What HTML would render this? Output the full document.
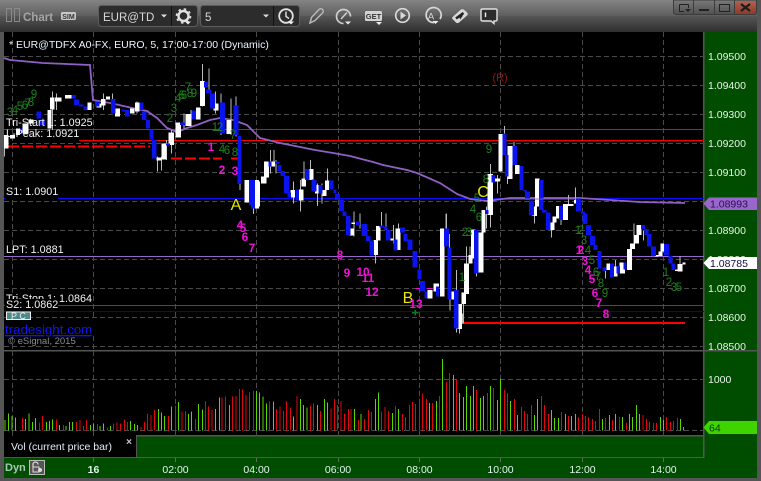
<!DOCTYPE html>
<html><head><meta charset="utf-8"><title>Chart</title>
<style>
html,body{margin:0;padding:0;background:#555;width:761px;height:481px;overflow:hidden}
svg{position:absolute;left:0;top:0;display:block}
text{font-family:"Liberation Sans",sans-serif}
.p{font-size:10.5px;fill:#e8f4e8}
.l{font-size:10.8px;fill:#f2f2f2}
.m{font-size:12px;font-weight:bold;fill:#f010d8;text-anchor:middle}
.g{font-size:11.5px;fill:#1a821a;text-anchor:middle}
.t{font-size:10.5px;fill:#e4f2f2;text-anchor:middle}
.y{font-size:16px;fill:#e8e800;text-anchor:middle}
</style></head><body>
<svg width="761" height="481" viewBox="0 0 761 481" xmlns="http://www.w3.org/2000/svg">
<defs>
<linearGradient id="tb" x1="0" y1="0" x2="0" y2="1"><stop offset="0" stop-color="#848484"/><stop offset=".5" stop-color="#5e5e5e"/><stop offset=".5" stop-color="#565656"/><stop offset="1" stop-color="#2e2e2e"/></linearGradient>
<linearGradient id="wb" x1="0" y1="0" x2="0" y2="1"><stop offset="0" stop-color="#7a7a7a"/><stop offset="1" stop-color="#505050"/></linearGradient>
<linearGradient id="xb" x1="0" y1="0" x2="0" y2="1"><stop offset="0" stop-color="#b5604e"/><stop offset="1" stop-color="#8c3a2c"/></linearGradient>
</defs>
<rect width="761" height="481" fill="#555"/>
<rect width="761" height="32" fill="url(#tb)"/>
<!-- chart and panels -->
<rect x="4" y="32" width="699" height="404" fill="#000"/>
<rect x="704" y="32" width="53" height="446" fill="#004d00"/>
<rect x="4" y="436" width="700" height="42" fill="#004d00"/>
<rect x="4" y="436" width="132" height="21" fill="#000"/>
<g fill="#555"><rect x="703" y="32" width="1.5" height="426"/><rect x="4" y="350" width="757" height="1.5"/><rect x="136" y="435" width="568" height="1.5"/><rect x="136" y="436" width="1" height="21"/><rect x="4" y="457" width="700" height="1"/><rect x="0" y="478" width="761" height="3"/><rect x="757" y="0" width="4" height="481"/><rect x="0" y="32" width="4" height="449"/></g>
<!-- grid -->
<g stroke="#4a4a4a" stroke-width="1" stroke-dasharray="5 3" shape-rendering="crispEdges" fill="none">
<path d="M4 56.5H708M4 85.5H708M4 114.5H708M4 143.5H708M4 172.5H708M4 201.5H708M4 230.5H708M4 259.5H708M4 288.5H708M4 317.5H708M4 346.5H708M4 379.5H708M4 430.5H708"/>
<path d="M12.5 32V350M93.5 32V350M175.5 32V350M256.5 32V350M338.5 32V350M419.5 32V350M500.5 32V350M582.5 32V350M663.5 32V350M12.5 351V436M93.5 351V436M175.5 351V436M256.5 351V436M338.5 351V436M419.5 351V436M500.5 351V436M582.5 351V436M663.5 351V436"/>
</g>
<!-- horizontal levels -->
<g shape-rendering="crispEdges" fill="none">
<path d="M4 129.5H704" stroke="#1c6e1c"/>
<path d="M79 140.5H704" stroke="#f00" stroke-width="1"/>
<path d="M8 146.5H150" stroke="#f00" stroke-width="2" stroke-dasharray="11 3"/>
<path d="M171 158.5H222M231 158.5H238" stroke="#f00" stroke-width="2" stroke-dasharray="11 3"/>
<path d="M4 198.5H704" stroke="#0a0aff" stroke-width="1"/>
<path d="M4 256.5H704" stroke="#9966cc" stroke-width="1"/>
<path d="M4 305.5H704" stroke="#1c6e1c"/>
<path d="M4 311.5H704" stroke="#0000c8"/>
<path d="M462 323H685" stroke="#f00" stroke-width="2"/>
</g>
<!-- vwap line -->
<path d="M4 58L10 60L43 63L90 65L93 100L110 103L137 109L147 111L157 118L167 128L177 132L187 128L197 125L210 120L220 118L233 120L247 125L260 138L280 143L315 150L333 153L350 156L373 162L383 165L407 170L417 173L440 183L457 194L470 199L487 201L510 198L580 198L610 200L640 202L685 203" fill="none" stroke="#9060c4" stroke-width="1.8"/>
<rect x="5" y="183" width="53" height="16" fill="#000"/>
<!-- candles left -->
<g transform="translate(0,60) scale(.33333)" shape-rendering="crispEdges">
<path fill="none" stroke="#bbb" stroke-width="3" d="M14 225V290M158 95V210M170 100V150M310 100V150M337 100V125M411 125V160M472 290V335M484 290V332M500 240V300M515 210V280M552 160V205M573 150V200M607 12V140M627 25V90M646 95V160M663 100V225M693 115V225M708 110V230M720 370V390M760 430V462"/>
<path fill="#fff" d="M12 225h13v40h-13zM30 225h15v10h-15zM48 205h12v20h-12zM68 190h17v30h-17zM85 178h15v12h-15zM142 150h13v55h-13zM150 113h13v35h-13zM165 112h20v13h-20zM195 105h20v10h-20zM262 128h13v22h-13zM290 130h15v12h-15zM303 117h14v20h-14zM318 110h12v8h-12zM345 145h15v25h-15zM390 145h13v15h-13zM405 128h13v27h-13zM470 293h15v9h-15zM485 250h15v48h-15zM505 218h17v37h-17zM527 187h16v46h-16zM557 162h18v36h-18zM588 142h14v36h-14zM600 63h15v75h-15zM640 130h15v22h-15zM680 180h15v42h-15zM733 360h19v68h-19zM760 365h20v75h-20z"/>
<path fill="#0a14ee" d="M60 205h8v13h-8zM110 155h15v20h-15zM120 178h15v17h-15zM215 105h13v10h-13zM222 118h15v17h-15zM237 133h13v7h-13zM250 140h12v10h-12zM285 125h13v15h-13zM333 117h13v43h-13zM365 148h10v7h-10zM375 150h13v20h-13zM418 128h12v22h-12zM426 155h14v25h-14zM438 180h12v25h-12zM448 208h12v30h-12zM456 240h14v56h-14zM498 250h12v6h-12zM540 187h15v8h-15zM575 152h13v26h-13zM612 65h12v18h-12zM618 88h17v12h-17zM630 100h15v45h-15zM660 127h15v93h-15zM700 137h16v88h-16zM712 228h13v144h-13zM747 360h13v75h-13z"/>
</g>
<!-- candles mid -->
<g transform="translate(250,150) scale(.33333)" shape-rendering="crispEdges">
<path fill="none" stroke="#bbb" stroke-width="3" d="M10 170V192M62 0V70M72 0V50M78 30V70M130 95V160M152 90V185M162 35V90M182 30V60M202 100V168M216 100V160M232 55V95M312 185V260M330 190V235M376 310V340M394 186V230M408 190V240M430 225V280M445 220V300M590 190V240M600 440V482M628 520V550M638 490V520M650 290V340M660 290V320"/>
<path fill="#fff" d="M15 90h12v85h-12zM33 80h17v20h-17zM42 35h15v47h-15zM65 35h10v15h-10zM122 120h13v22h-13zM145 118h15v34h-15zM155 85h13v25h-13zM178 57h12v33h-12zM195 105h10v25h-10zM217 120h13v18h-13zM225 92h12v28h-12zM298 235h14v22h-14zM305 217h10v5h-10zM370 270h14v45h-14zM378 228h14v44h-14zM420 265h10v7h-10zM437 235h15v65h-15zM532 420h15v25h-15zM550 400h17v25h-17z"/>
<path fill="#0a14ee" d="M3 90h12v85h-12zM55 35h10v15h-10zM75 35h13v7h-13zM82 45h13v18h-13zM92 63h13v15h-13zM102 78h16v52h-16zM113 128h10v15h-10zM137 118h10v34h-10zM165 57h13v33h-13zM185 88h15v37h-15zM205 105h13v25h-13zM237 92h13v26h-13zM250 118h10v12h-10zM255 132h15v18h-15zM267 150h15v33h-15zM277 185h13v13h-13zM288 198h14v57h-14zM318 215h12v12h-12zM335 222h17v36h-17zM348 258h14v15h-14zM358 272h14v45h-14zM388 227h12v6h-12zM400 230h12v8h-12zM408 240h14v32h-14zM430 268h12v34h-12zM450 232h15v16h-15zM460 252h13v23h-13zM472 268h15v32h-15zM487 303h16v50h-16zM502 358h13v30h-13zM510 393h15v32h-15zM523 425h9v20h-9zM558 410h9v30h-9z"/>
<path fill="#f010d8" d="M496 414h12v3h-12zM530 414h18v3h-18z"/>
<path fill="#0c7a20" d="M486 486h20v4h-20zM493 480h5v16h-5z"/>
</g>
<!-- candles right -->
<g transform="translate(440,110) scale(.33333)" shape-rendering="crispEdges">
<path fill="none" stroke="#bbb" stroke-width="3" d="M18 312V355M28 372V412M50 480V540M50 655V668M70 580V640M80 410V460M110 490V500M140 290V355M152 162V192M152 315V352M172 195V250M194 48V72M203 200V222M222 95V108M284 318V340M334 360V382M363 290V345M385 255V285M406 232V270M496 483V505M527 450V500M582 340V400M610 362V392M720 438V465"/>
<path fill="#fff" d="M0 355h14v205h-14zM33 545h10v23h-10zM52 582h14v75h-14zM65 548h13v34h-13zM72 460h15v92h-15zM85 435h13v25h-13zM93 358h14v87h-14zM115 368h15v120h-15zM124 300h13v68h-13zM143 192h16v123h-16zM165 205h15v10h-15zM175 72h13v113h-13zM203 108h14v99h-14zM225 165h13v27h-13zM276 290h15v28h-15zM285 205h13v85h-13zM327 338h16v22h-16zM337 320h13v18h-13zM348 288h10v37h-10zM369 282h15v48h-15zM384 282h16v6h-16zM402 270h6v10h-6zM500 460h10v20h-10zM518 470h15v30h-15zM538 458h17v32h-17zM561 417h15v63h-15zM570 400h15v17h-15zM582 375h15v25h-15zM590 345h15v30h-15zM645 435h10v5h-10zM655 425h13v13h-13zM662 400h10v25h-10zM705 478h8v5h-8zM713 462h15v23h-15zM728 458h9v5h-9z"/>
<path fill="#0a14ee" d="M12 355h15v55h-15zM22 412h13v156h-13zM42 540h13v115h-13zM102 360h13v130h-13zM135 300h10v12h-10zM155 195h10v23h-10zM187 70h13v65h-13zM195 135h10v65h-10zM217 108h14v57h-14zM238 168h13v72h-13zM250 240h10v5h-10zM255 245h15v25h-15zM267 272h15v45h-15zM297 210h14v90h-14zM306 300h14v8h-14zM318 308h14v52h-14zM357 288h12v42h-12zM408 265h15v40h-15zM423 305h12v5h-12zM428 310h15v32h-15zM438 345h15v32h-15zM450 378h15v27h-15zM460 405h13v15h-13zM472 423h13v52h-13zM487 472h13v11h-13zM510 460h12v43h-12zM530 468h10v22h-10zM550 458h10v20h-10zM603 345h12v12h-12zM613 357h12v18h-12zM621 372h14v38h-14zM633 410h15v28h-15zM672 402h15v35h-15zM685 438h13v22h-13zM695 460h12v20h-12z"/>
</g>
<path d="M500 199H576" stroke="#9060c4" stroke-width="1.2" fill="none" opacity=".7"/>
<!-- labels -->
<text x="6" y="126" class="l">Tri-Start 1: 1.0925</text>
<text x="6" y="137" class="l">L-Peak: 1.0921</text>
<text x="6" y="195" class="l">S1: 1.0901</text>
<text x="6" y="253" class="l">LPT: 1.0881</text>
<text x="6" y="302" class="l">Tri-Stop 1: 1.0864</text>
<rect x="5" y="299" width="54" height="12" fill="#000"/>
<text x="6" y="308" class="l">S2: 1.0862</text>
<path d="M58 305.5H90" stroke="#1c6e1c" shape-rendering="crispEdges"/>
<rect x="6.5" y="312" width="24" height="7.5" fill="#4a8a8a" stroke="#eee" stroke-width="1" shape-rendering="crispEdges"/>
<text x="11" y="319" style="font-size:9px;fill:#eee">P C</text>
<rect x="4" y="320" width="92" height="16" fill="#000"/>
<text x="5" y="334" style="font-size:13.3px;fill:#1414f0;text-decoration:underline">tradesight.com</text>
<text x="8" y="344" style="font-size:9.5px;fill:#8c8c8c">© eSignal, 2015</text>
<text x="9" y="48" style="font-size:10.5px;fill:#eef4ff">* EUR@TDFX A0-FX, EURO, 5, 17:00-17:00 (Dynamic)</text>
<!-- annotations -->
<text x="500" y="81" style="font-size:11px;fill:#9a1212;text-anchor:middle">(R)</text>
<text x="236" y="210" class="y">A</text><text x="408" y="303" class="y">B</text><text x="483" y="197" class="y">C</text>
<g>
<text class="g" x="34" y="98">9</text><text class="g" x="31" y="106">8</text><text class="g" x="28" y="107">7</text><text class="g" x="25" y="109">6</text><text class="g" x="20" y="110">5</text><text class="g" x="15" y="114">4</text><text class="g" x="10" y="116">3</text>
<text class="g" x="170" y="122">2</text><text class="g" x="174" y="112">3</text><text class="g" x="178" y="102">4</text><text class="g" x="182" y="99">5</text><text class="g" x="184" y="99">6</text><text class="g" x="188" y="91">7</text><text class="g" x="190" y="97">8</text><text class="g" x="194" y="97">9</text>
<text class="g" x="215" y="131">1</text><text class="g" x="220" y="131">2</text><text class="g" x="233" y="139">7</text><text class="g" x="222" y="153">4</text><text class="g" x="227" y="154">6</text><text class="g" x="235" y="156">8</text>
<text class="g" x="489" y="153">9</text><text class="g" x="486" y="183">8</text><text class="g" x="477" y="202">5</text><text class="g" x="473" y="213">4</text><text class="g" x="479" y="221">6</text><text class="g" x="465" y="236">2</text><text class="g" x="469" y="236">3</text><text class="g" x="462" y="281">1</text>
<text class="g" x="578" y="234">1</text><text class="g" x="581" y="234">2</text><text class="g" x="584" y="244">3</text><text class="g" x="588" y="254">4</text><text class="g" x="592" y="264">5</text><text class="g" x="596" y="276">6</text><text class="g" x="598" y="280">7</text><text class="g" x="601" y="287">8</text><text class="g" x="605" y="297">9</text>
<text class="g" x="666" y="276">1</text><text class="g" x="669" y="286">2</text><text class="g" x="674" y="291">3</text><text class="g" x="679" y="291">5</text>
</g>
<g>
<text class="m" x="211" y="151">1</text><text class="m" x="222" y="174">2</text><text class="m" x="235" y="175">3</text>
<text class="m" x="240" y="229">4</text><text class="m" x="243" y="232">5</text><text class="m" x="245" y="241">6</text><text class="m" x="252" y="252">7</text>
<text class="m" x="340" y="259">8</text><text class="m" x="347" y="277">9</text><text class="m" x="363" y="276">10</text><text class="m" x="368" y="282">11</text><text class="m" x="372" y="296">12</text><text class="m" x="416" y="308">13</text>
<text class="m" x="579" y="254">1</text><text class="m" x="581" y="254">2</text><text class="m" x="585" y="265">3</text><text class="m" x="588" y="274">4</text><text class="m" x="592" y="283">5</text><text class="m" x="595" y="297">6</text><text class="m" x="599" y="307">7</text><text class="m" x="606" y="318">8</text>
</g>
<!-- volume -->
<g transform="translate(0,350) scale(.33333)" shape-rendering="crispEdges" fill="none" stroke-width="3">
<path stroke="#55d800" d="M15 241V210M25 241V190M36 241V198M46 241V202M76 241V207M87 241V190M97 241V216M107 241V204M139 241V216M148 241V213M158 241V208M179 241V225M198 241V228M208 241V216M218 241V216M271 241V225M280 241V220M300 241V228M310 241V220M331 241V228M391 241V213M403 241V222M412 241V225M475 241V177M484 241V188M494 241V198M515 241V170M536 241V156M565 241V192M574 241V185M595 241V162M607 241V178M646 241V177M658 241V143M688 241V165M769 241V123M778 241V128M789 241V140M799 241V160M820 241V155M880 241V200M901 241V147M911 241V165M921 241V173M952 241V165M973 241V147M982 241V158M1063 241V177M1083 241V192M1126 241V147M1136 241V128"/>
<path stroke="#e00808" d="M67 241V204M118 241V217M128 241V198M169 241V208M190 241V225M229 241V216M240 241V210M250 241V228M259 241V210M292 241V222M322 241V232M340 241V220M351 241V218M362 241V220M373 241V208M382 241V216M423 241V231M433 241V216M443 241V192M453 241V195M463 241V180M505 241V198M526 241V166M546 241V185M556 241V183M586 241V207M616 241V153M626 241V170M636 241V180M666 241V143M676 241V140M697 241V140M708 241V138M718 241V117M727 241V118M738 241V135M748 241V128M760 241V123M809 241V155M829 241V177M840 241V170M850 241V183M860 241V153M871 241V173M891 241V138M931 241V168M941 241V160M962 241V183M993 241V175M1003 241V147M1012 241V165M1023 241V153M1033 241V190M1045 241V177M1053 241V177M1075 241V210M1094 241V207M1105 241V180M1115 241V186"/>
</g>
<g transform="translate(380,350) scale(.33333)" shape-rendering="crispEdges" fill="none" stroke-width="3">
<path stroke="#55d800" d="M37 241V189M55 241V177M148 241V159M169 241V153M187 241V27M220 241V75M239 241V129M250 241V141M259 241V108M271 241V138M280 241V108M301 241V144M310 241V138M331 241V108M352 241V150M361 241V87M391 241V153M412 241V195M463 241V195M473 241V147M514 241V180M524 241V204M535 241V204M556 241V192M574 241V198M586 241V192M667 241V207M688 241V195M706 241V192M727 241V201M748 241V192M758 241V201M769 241V165M778 241V192M841 241V201M850 241V210M901 241V207M910 241V231"/>
<path stroke="#e00808" d="M4 241V185M15 241V171M26 241V183M46 241V168M67 241V192M76 241V201M88 241V165M97 241V156M107 241V162M118 241V162M128 241V131M139 241V147M158 241V159M178 241V138M199 241V96M208 241V69M229 241V90M290 241V120M322 241V129M340 241V114M373 241V120M382 241V129M403 241V147M424 241V171M433 241V183M443 241V192M454 241V165M484 241V138M494 241V165M505 241V192M545 241V186M565 241V198M596 241V201M607 241V192M616 241V198M626 241V201M637 241V207M646 241V213M658 241V177M676 241V204M697 241V210M718 241V201M739 241V219M789 241V195M799 241V207M808 241V216M820 241V219M829 241V219M859 241V201M871 241V216M880 241V213M892 241V204"/>
</g>
<!-- price axis -->
<text class="p" x="708" y="60">1.09500</text><text class="p" x="708" y="89">1.09400</text><text class="p" x="708" y="118">1.09300</text><text class="p" x="708" y="147">1.09200</text><text class="p" x="708" y="176">1.09100</text><text class="p" x="708" y="234">1.08900</text><text class="p" x="708" y="263">1.08800</text><text class="p" x="708" y="292">1.08700</text><text class="p" x="708" y="321">1.08600</text>
<svg x="704" y="340" width="53" height="10"><text class="p" x="4" y="10">1.08500</text></svg>
<text class="p" x="708" y="383">1000</text>
<path d="M757 197.5H709L703.5 203.5L709 210H757Z" fill="#9966cc"/>
<text x="710" y="207.5" style="font-size:10.5px;fill:#2a1050">1.08993</text>
<path d="M757 257H709L703.5 263L709 269H757Z" fill="#fff"/>
<text x="710" y="267" style="font-size:10.5px;fill:#1a0a40">1.08785</text>
<path d="M757 421H709L703.5 427.5L709 434H757Z" fill="#3fd400"/>
<text x="709" y="431.5" style="font-size:10.5px;fill:#0a3a0a">64</text>
<!-- vol tab -->
<text x="11" y="450" style="font-size:10.5px;fill:#e4eef8">Vol (current price bar)</text>
<text x="129" y="445" style="font-size:10px;font-weight:bold;fill:#ccc;text-anchor:middle">×</text>
<!-- time axis -->
<g stroke="#666" shape-rendering="crispEdges"><path d="M93.5 458v4M175.5 458v4M256.5 458v4M338.5 458v4M419.5 458v4M500.5 458v4M582.5 458v4M663.5 458v4"/></g>
<text x="5" y="471" style="font-size:11px;font-weight:bold;fill:#a8c8b8">Dyn</text>
<rect x="29.5" y="460.5" width="15" height="14" fill="#555" stroke="#bbb" shape-rendering="crispEdges"/>
<path d="M33 467v-2.5a2.5 2.5 0 0 1 5 0" fill="none" stroke="#ddd" stroke-width="1.2"/><rect x="33" y="467" width="6" height="5" fill="none" stroke="#ddd"/><circle cx="40" cy="470" r="2" fill="#ddd"/>
<text class="t" x="93.5" y="473" style="font-weight:bold">16</text><text class="t" x="175.5" y="473">02:00</text><text class="t" x="256.5" y="473">04:00</text><text class="t" x="338" y="473">06:00</text><text class="t" x="419.5" y="473">08:00</text><text class="t" x="500.5" y="473">10:00</text><text class="t" x="582.5" y="473">12:00</text><text class="t" x="663.5" y="473">14:00</text>
<!-- toolbar -->
<g fill="none" stroke="#8a8a8a" stroke-width="1" shape-rendering="crispEdges"><rect x="6.5" y="8.5" width="5" height="13"/><rect x="14.5" y="8.5" width="5" height="13"/></g>
<text x="23" y="21" style="font-size:11.5px;font-weight:bold;fill:#a4a4a4">Chart</text>
<rect x="61" y="12" width="15" height="8" rx="1.5" fill="#c8c8c8"/><text x="68.5" y="19" style="font-size:7px;font-weight:bold;fill:#333;text-anchor:middle">SIM</text>
<rect x="98.5" y="5.5" width="99" height="21" rx="3" fill="#2c2c2c" stroke="#5c5c5c"/>
<rect x="200.5" y="5.5" width="99" height="21" rx="3" fill="#2c2c2c" stroke="#5c5c5c"/>
<path d="M171.5 6V26M273.5 6V26" stroke="#111" shape-rendering="crispEdges"/>
<svg x="100" y="6" width="55" height="20"><text x="3" y="15" style="font-size:11.5px;fill:#d8d8d8">EUR@TDFX</text></svg>
<text x="205" y="21" style="font-size:11.5px;fill:#d8d8d8">5</text>
<path d="M161 14.5h6l-3 3zM263 14.5h6l-3 3z" fill="#ddd"/>
<!-- gear -->
<circle cx="183.5" cy="16" r="5" fill="none" stroke="#e2e2e2" stroke-width="2.4"/><circle cx="183.5" cy="16" r="7" fill="none" stroke="#e2e2e2" stroke-width="1.6" stroke-dasharray="2.5 3"/><path d="M185 21.5h6l-3 3z" fill="#eee"/>
<!-- clock -->
<circle cx="286" cy="16" r="6.8" fill="none" stroke="#e2e2e2" stroke-width="1.8"/><path d="M286 11.500V16.500L289 18.500" fill="none" stroke="#e2e2e2" stroke-width="1.4"/><path d="M288 21.5h6l-3 3z" fill="#eee"/>
<!-- pencil -->
<path d="M310 23L311.5 17.5L319 9.5C320 8.500 321.5 8.500 322.5 9.5C323.5 10.5 323.5 12 322.5 13L315 20.5Z" fill="none" stroke="#b8b8b8" stroke-width="1.5"/>
<!-- gauge -->
<path d="M343.5 23.5A7 7 0 1 1 350.5 16.5" fill="none" stroke="#cfcfcf" stroke-width="1.7"/><path d="M341 19L347 12.5" stroke="#cfcfcf" stroke-width="1.5"/><path d="M345 21.5h6l-3 3z" fill="#eee"/>
<!-- GET -->
<rect x="365" y="11" width="17" height="10" rx="1.5" fill="#d4d4d4"/><text x="373.5" y="19" style="font-size:7.5px;font-weight:bold;fill:#333;text-anchor:middle">GET</text><path d="M376 22h6l-3 3z" fill="#eee"/>
<!-- play -->
<circle cx="402.5" cy="15.5" r="6.8" fill="none" stroke="#d8d8d8" stroke-width="1.7"/><path d="M400.5 11.5L406 15.5L400.5 19.5Z" fill="#d8d8d8"/>
<!-- A circle -->
<path d="M434 22.5A7.5 7.5 0 1 1 440 19" fill="none" stroke="#d8d8d8" stroke-width="1.7"/><text x="431" y="19.5" style="font-size:9.5px;fill:#d8d8d8;text-anchor:middle">A</text><path d="M432.5 21h6l-3 3z" fill="#eee"/>
<!-- diamond -->
<path d="M452.5 17L461 9.5C462 8.800 463 9 464 9.800L467 12.5C468 13.5 468 14.5 467 15.5L459 22.5C458 23.300 457 23.300 456 22.5L452.5 19C452 18.5 452 17.5 452.5 17Z" fill="#d8d8d8"/><path d="M456 18.5L463.5 13" stroke="#222" stroke-width="2.5"/><path d="M460 19.5L459 15L463 15.5" fill="#222"/>
<!-- chat -->
<path d="M482.5 9H495.5C496.5 9 497 9.5 497 10.5V19.5C497 20.5 496.5 21 495.5 21H494V23.5L491 21H482.5C481.5 21 481 20.5 481 19.5V10.5C481 9.5 481.5 9 482.5 9Z" fill="#2c2c2c" stroke="#e2e2e2" stroke-width="1.4"/><path d="M485.5 12.5V17" stroke="#eee" stroke-width="1.4"/>
<!-- window buttons -->
<path d="M673.5 0V11.5Q673.5 14.5 676.5 14.5H754Q756.5 14.5 756.5 11.5V0Z" fill="url(#wb)" stroke="#3c3c3c"/>
<path d="M693.5 0V14.5M714.5 0V14.5M734.5 0V14.5" stroke="#3c3c3c" shape-rendering="crispEdges"/>
<path d="M735 1H756V11Q756 14 753 14H735Z" fill="url(#xb)"/>
<path d="M679.5 4.5H688.5M679.5 4.5V11.5H684M688.5 4.5V8" fill="none" stroke="#222" stroke-width="1" shape-rendering="crispEdges"/><path d="M685 9h6l-3 3z" fill="#222"/>
<rect x="699" y="9" width="10" height="2" fill="#222"/>
<rect x="719.5" y="4.5" width="10" height="7" fill="none" stroke="#222" stroke-width="1.2" shape-rendering="crispEdges"/>
<path d="M741 4L750 11M750 4L741 11" stroke="#1c1c1c" stroke-width="2.2"/>
</svg>
</body></html>
